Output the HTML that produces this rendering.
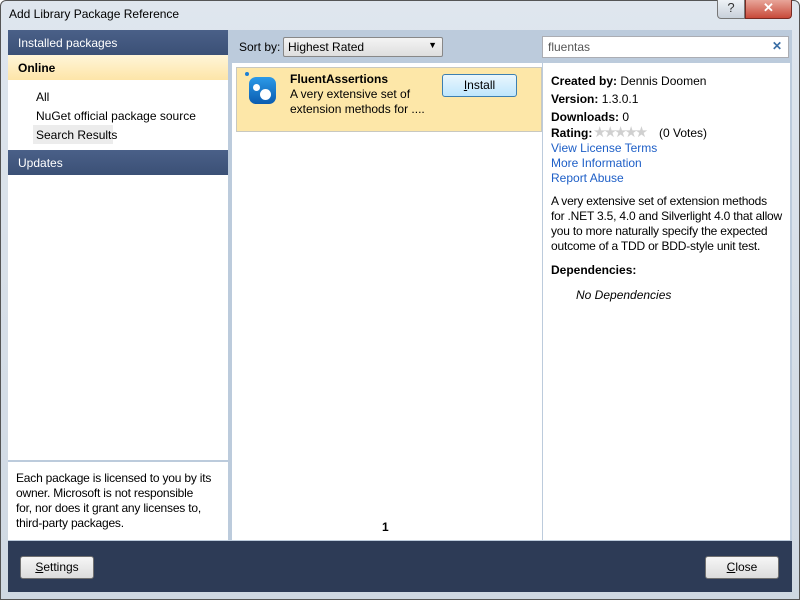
<!DOCTYPE html>
<html><head><style>
*{margin:0;padding:0;box-sizing:border-box}
body{width:800px;height:600px;overflow:hidden;background:#fff;font-family:"Liberation Sans",sans-serif;font-size:12px;color:#000;position:relative}
.a{position:absolute;white-space:nowrap}
.frame{left:0;top:0;width:800px;height:600px;background:linear-gradient(#dfe6ee,#cfd8e2);border:1px solid #555;border-radius:6px 6px 0 0}
.hdr{background:linear-gradient(#4a6088,#3b5076);color:#fff;padding:6px 10px;font-size:12px}
.btn{background:linear-gradient(#f6f6f6,#dcdcdc);border:1px solid #707070;border-radius:3px;text-align:center;line-height:20px}
a{color:#1e5fc7;text-decoration:none}
.n{letter-spacing:-0.2px}
</style></head><body>
<div class="a frame"></div>
<div class="a" style="left:9px;top:7px;font-size:12px">Add Library Package Reference</div>
<div class="a" style="left:717px;top:0;width:28px;height:19px;border:1px solid #777;border-top:none;border-radius:0 0 0 4px;background:linear-gradient(#eef2f6,#c8d0da);text-align:center;font-size:13px;color:#333">?</div>
<div class="a" style="left:745px;top:0;width:47px;height:19px;border:1px solid #7a2a22;border-top:none;border-radius:0 0 4px 0;background:linear-gradient(#e8a69a,#c84a3a);text-align:center;color:#fff;font-weight:bold;font-size:13px">✕</div>

<div class="a" style="left:8px;top:30px;width:784px;height:511px;background:#bccbdc"></div>
<!-- left -->
<div class="a" style="left:8px;top:30px;width:220px;height:510px;background:#fff"></div>
<div class="a hdr" style="left:8px;top:30px;width:220px;height:25px">Installed packages</div>
<div class="a" style="left:8px;top:55px;width:220px;height:25px;background:linear-gradient(#fff5d8,#fde5a8);font-weight:bold;padding:6px 10px">Online</div>
<div class="a" style="left:36px;top:90px">All</div>
<div class="a" style="left:36px;top:109px">NuGet official package source</div>
<div class="a" style="left:33px;top:125px;width:80px;height:19px;background:#ececec"></div>
<div class="a" style="left:36px;top:128px">Search Results</div>
<div class="a hdr" style="left:8px;top:150px;width:220px;height:25px">Updates</div>
<div class="a" style="left:8px;top:460px;width:220px;height:2px;background:#bccbdc"></div>
<div class="a n" style="left:16px;top:471px;line-height:15px">Each package is licensed to you by its<br>owner. Microsoft is not responsible<br>for, nor does it grant any licenses to,<br>third-party packages.</div>
<!-- middle -->
<div class="a" style="left:239px;top:40px">Sort by:</div>
<div class="a" style="left:283px;top:37px;width:160px;height:20px;border:1px solid #888;border-radius:2px;background:linear-gradient(#f4f4f4,#dedede);padding:2px 4px">Highest Rated<span style="position:absolute;right:5px;top:2px;font-size:9px">▼</span></div>
<div class="a" style="left:232px;top:63px;width:310px;height:477px;background:#fff"></div>
<div class="a" style="left:236px;top:67px;width:306px;height:65px;background:#fde7a8;border:1px solid #c8c8c0"></div>
<div class="a" style="left:245px;top:72px;width:4px;height:4px;border-radius:2px;background:#1c7fd4"></div>
<div class="a" style="left:249px;top:77px;width:27px;height:27px;border-radius:7px;background:linear-gradient(#2c9ae8,#0a5cb0)"></div>
<div class="a" style="left:253px;top:84px;width:7px;height:7px;border-radius:4px;background:#fff"></div>
<div class="a" style="left:260px;top:89px;width:11px;height:11px;border-radius:6px;background:#fff"></div>
<div class="a" style="left:290px;top:72px;font-weight:bold">FluentAssertions</div>
<div class="a" style="left:290px;top:87px;line-height:15px">A very extensive set of<br>extension methods for ....</div>
<div class="a btn" style="left:442px;top:74px;width:75px;height:23px;border-color:#3c7fb1;background:linear-gradient(#eaf6fd,#bee6fd)"><u>I</u>nstall</div>
<div class="a" style="left:382px;top:520px;font-weight:bold">1</div>
<!-- right -->
<div class="a" style="left:542px;top:36px;width:247px;height:22px;background:#fff;border:1px solid #abadb3;padding:3px 5px;color:#555">fluentas<span style="position:absolute;right:6px;top:2px;color:#3a6ea5;font-weight:bold">✕</span></div>
<div class="a" style="left:543px;top:63px;width:247px;height:477px;background:#fff"></div>
<div class="a" style="left:551px;top:72px;line-height:18px"><b>Created by:</b> Dennis Doomen<br><b>Version:</b> 1.3.0.1<br><b>Downloads:</b> 0</div>
<div class="a" style="left:551px;top:126px"><b>Rating:</b></div>
<div class="a" style="left:593px;top:123px;color:#d0d0d0;font-size:15px;letter-spacing:-3px">★★★★★</div>
<div class="a" style="left:659px;top:126px">(0 Votes)</div>
<div class="a" style="left:551px;top:141px;line-height:15px"><a>View License Terms</a><br><a>More Information</a><br><a>Report Abuse</a></div>
<div class="a n" style="left:551px;top:194px;line-height:15px">A very extensive set of extension methods<br>for .NET 3.5, 4.0 and Silverlight 4.0 that allow<br>you to more naturally specify the expected<br>outcome of a TDD or BDD-style unit test.</div>
<div class="a" style="left:551px;top:263px;font-weight:bold">Dependencies:</div>
<div class="a" style="left:576px;top:288px;font-style:italic">No Dependencies</div>
<!-- bottom -->
<div class="a" style="left:8px;top:541px;width:784px;height:51px;background:#2d3b56"></div>
<div class="a btn" style="left:20px;top:556px;width:74px;height:23px"><u>S</u>ettings</div>
<div class="a btn" style="left:705px;top:556px;width:74px;height:23px"><u>C</u>lose</div>
</body></html>
